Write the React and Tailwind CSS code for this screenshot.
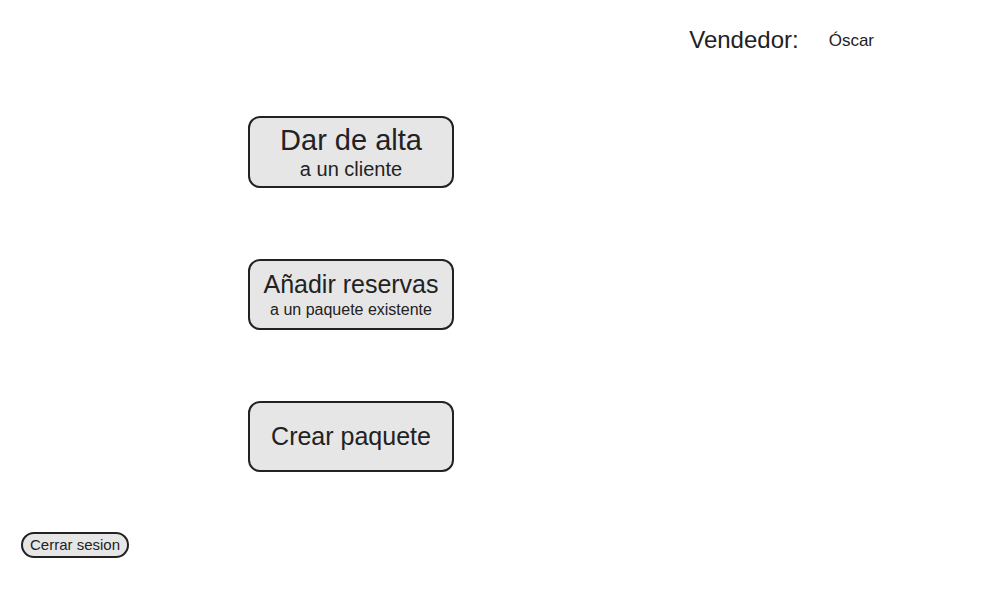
export default function App() {
  const font = { fontFamily: '"Liberation Sans", Arial, sans-serif' };

  return (
    <div
      className="w-[1000px] h-[600px] bg-white text-[#222222] flex flex-col"
      style={font}
    >
      <header className="flex items-center justify-end pr-[126px] pt-[24px] h-[56px]">
        <span className="text-[24px] leading-none">Vendedor:</span>
        <span className="text-[17px] leading-none ml-[30px] mt-[1px]">Óscar</span>
      </header>

      <main className="flex flex-col gap-[71px] pl-[248px] pt-[60px]">
        <button className="w-[206px] h-[72px] rounded-[12px] border-2 border-[#222222] bg-[#e6e6e6] flex flex-col items-center justify-center gap-[2px]">
          <span className="text-[29px] leading-[32px]">Dar de alta</span>
          <span className="text-[20px] leading-[22px]">a un cliente</span>
        </button>

        <button className="w-[206px] h-[71px] rounded-[12px] border-2 border-[#222222] bg-[#e6e6e6] flex flex-col items-center justify-center gap-[2px]">
          <span className="text-[25px] leading-[28px]">Añadir reservas</span>
          <span className="text-[16px] leading-[19px]">a un paquete existente</span>
        </button>

        <button className="w-[206px] h-[71px] rounded-[12px] border-2 border-[#222222] bg-[#e6e6e6] flex items-center justify-center">
          <span className="text-[25px] leading-none">Crear paquete</span>
        </button>
      </main>

      <footer className="pl-[21px] pt-[60px]">
        <button className="h-[26px] px-[7px] pb-[2px] rounded-full border-2 border-[#222222] bg-[#e6e6e6] text-[15px] leading-none">
          Cerrar sesion
        </button>
      </footer>
    </div>
  );
}
